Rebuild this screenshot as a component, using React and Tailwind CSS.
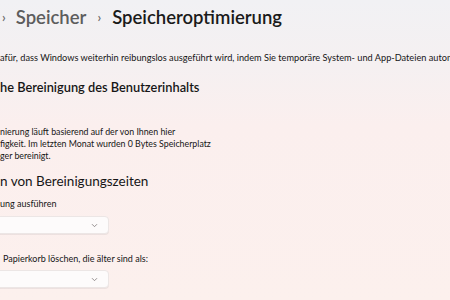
import React from "react";

const Dropdown = () => (
  <div className="relative -ml-[40px] h-[18px] w-[149px] rounded-[4px] border border-[#ece6e5] bg-[#fdfbfb] shadow-[0_1px_0_rgba(0,0,0,0.06)]">
    <svg
      className="absolute right-[10px] top-[6px]"
      width="7"
      height="5"
      viewBox="0 0 7 5"
      fill="none"
    >
      <path d="M1 1.2 L3.5 3.7 L6 1.2" stroke="#8a8585" strokeWidth="0.9" />
    </svg>
  </div>
);

const App = () => {
  return (
    <div
      className="h-[300px] w-[450px] overflow-hidden bg-[linear-gradient(180deg,#f1f1f4_0%,#f5f0f1_22%,#fbefee_42%,#fcf0ed_100%)] text-[#161616]"
      style={{ fontFamily: 'Lato, "Open Sans", sans-serif' }}
    >
      {/* breadcrumb */}
      <div className="flex h-[34px] items-center pt-[1px] text-[18.5px] font-semibold leading-none">
        <span className="ml-[2px] text-[13px] text-[#6a6a6a]">›</span>
        <span className="ml-[10px] text-[#5d5d5d]">Speicher</span>
        <span className="ml-[11px] text-[13px] text-[#6a6a6a]">›</span>
        <span className="ml-[11px] text-[#1a1a1a]">Speicheroptimierung</span>
      </div>

      <p className="mt-[17px] whitespace-nowrap text-[9.2px] leading-[14px]">
        afür, dass Windows weiterhin reibungslos ausgeführt wird, indem Sie temporäre System- und App-Dateien automatisch bereinigen.
      </p>

      <h2 className="mt-[13px] whitespace-nowrap text-[12.8px] font-semibold leading-[18px]">
        he Bereinigung des Benutzerinhalts
      </h2>

      <div className="mt-[30px] text-[8.8px] leading-[12px]">
        <p>nierung läuft basierend auf der von Ihnen hier</p>
        <p>figkeit. Im letzten Monat wurden 0 Bytes Speicherplatz</p>
        <p>ger bereinigt.</p>
      </div>

      <h3 className="mt-[10px] text-[13.5px] leading-[18px]">n von Bereinigungszeiten</h3>

      <p className="mt-[7px] text-[9px] leading-[13px]">ung ausführen</p>
      <div className="mt-[6px]">
        <Dropdown />
      </div>

      <p className="ml-[3px] mt-[18px] text-[9px] leading-[13px]">
        Papierkorb löschen, die älter sind als:
      </p>
      <div className="mt-[5px]">
        <Dropdown />
      </div>
    </div>
  );
};

export default App;
